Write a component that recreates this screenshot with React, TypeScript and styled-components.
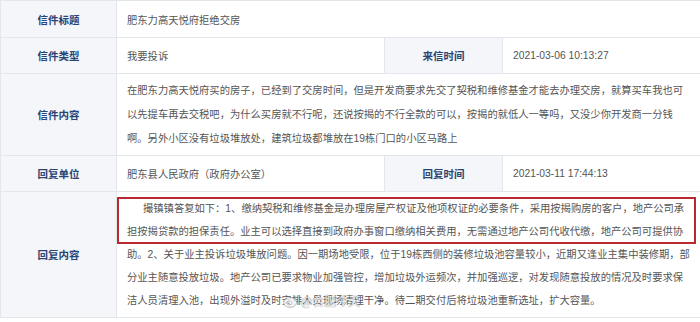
import React from "react";
import styled, { createGlobalStyle } from "styled-components";

const Global = createGlobalStyle`
  html, body { margin: 0; padding: 0; background: #fff; }
  body { font-family: "Liberation Sans", "Noto Sans CJK SC", sans-serif; }
`;

const Table = styled.div`
  display: grid;
  grid-template-columns: 116px 268px 118px 198px;
  grid-template-rows: 37px 36px 82px 36px 126px;
  width: 700px;
  box-sizing: border-box;
  border-top: 1px solid #e3e6eb;
  border-left: 1px solid #e3e6eb;
  font-size: 10.3px;
`;

const Cell = styled.div<{ $span?: boolean }>`
  box-sizing: border-box;
  border-right: 1px solid #e3e6eb;
  border-bottom: 1px solid #e3e6eb;
  display: flex;
  align-items: center;
  grid-column: ${(p) => (p.$span ? "2 / -1" : "auto")};
  min-width: 0;
`;

const Label = styled(Cell)`
  background: #f4f6fa;
  color: #2a4474;
  font-weight: 600;
  font-size: 10.5px;
  justify-content: center;
  font-family: "Noto Sans CJK SC", sans-serif;
`;

const Value = styled(Cell)`
  color: #555;
  padding: 0 10px;
  font-family: "Liberation Sans", "Noto Sans CJK SC", sans-serif;
`;

const Para = styled.p<{ $lh: number }>`
  margin: 0;
  line-height: ${(p) => p.$lh}px;
  white-space: nowrap;
  color: #555;
`;

const Line = styled.span<{ $indent?: boolean }>`
  display: block;
  padding-left: ${(p) => (p.$indent ? "16px" : "0")};
`;

const ReplyCell = styled(Value)`
  position: relative;
`;

const Highlight = styled.div`
  position: absolute;
  left: 0;
  right: 4px;
  top: 5px;
  height: 47px;
  box-sizing: border-box;
  border: 2px solid #b92a30;
  pointer-events: none;
`;

const Watermark = styled.div`
  position: absolute;
  left: 166px;
  top: 100px;
  display: flex;
  align-items: center;
  gap: 2px;
  font-family: "Noto Sans CJK SC", sans-serif;
  font-size: 12px;
  color: rgba(255, 255, 255, 0.85);
  text-shadow: 0 0 1px #888, 0 0 1px #888;
  opacity: 0.8;
`;

const WeiboLogo = () => (
  <svg width="16" height="14" viewBox="0 0 16 14">
    <ellipse cx="7" cy="8.5" rx="6.5" ry="4.8" fill="#fff" stroke="#999" strokeWidth="0.9" />
    <ellipse cx="6.3" cy="9" rx="2.6" ry="2" fill="none" stroke="#999" strokeWidth="0.8" />
    <circle cx="5.8" cy="9.3" r="0.8" fill="#999" />
    <path d="M11 2.2 A3.3 3.3 0 0 1 14.6 5.6" fill="none" stroke="#999" strokeWidth="0.9" />
    <path d="M11.2 3.8 A1.6 1.6 0 0 1 12.9 5.5" fill="none" stroke="#999" strokeWidth="0.9" />
  </svg>
);

export default function App() {
  return (
    <>
      <Global />
      <Table>
        <Label>信件标题</Label>
        <Value $span>肥东力高天悦府拒绝交房</Value>

        <Label>信件类型</Label>
        <Value>我要投诉</Value>
        <Label>来信时间</Label>
        <Value>2021-03-06 10:13:27</Value>

        <Label>信件内容</Label>
        <Value $span>
          <Para $lh={24}>
            <Line>在肥东力高天悦府买的房子，已经到了交房时间，但是开发商要求先交了契税和维修基金才能去办理交房，就算买车我也可</Line>
            <Line>以先提车再去交税吧，为什么买房就不行呢，还说按揭的不行全款的可以，按揭的就低人一等吗，又没少你开发商一分钱</Line>
            <Line>啊。另外小区没有垃圾堆放处，建筑垃圾都堆放在19栋门口的小区马路上</Line>
          </Para>
        </Value>

        <Label>回复单位</Label>
        <Value>肥东县人民政府（政府办公室）</Value>
        <Label>回复时间</Label>
        <Value>2021-03-11 17:44:13</Value>

        <Label>回复内容</Label>
        <ReplyCell $span>
          <Para $lh={23}>
            <Line $indent>撮镇镇答复如下：1、缴纳契税和维修基金是办理房屋产权证及他项权证的必要条件，采用按揭购房的客户，地产公司承</Line>
            <Line>担按揭贷款的担保责任。业主可以选择直接到政府办事窗口缴纳相关费用，无需通过地产公司代收代缴，地产公司可提供协</Line>
            <Line>助。2、关于业主投诉垃圾堆放问题。因一期场地受限，位于19栋西侧的装修垃圾池容量较小，近期又逢业主集中装修期，部</Line>
            <Line>分业主随意投放垃圾。地产公司已要求物业加强管控，增加垃圾外运频次，并加强巡逻，对发现随意投放的情况及时要求保</Line>
            <Line>洁人员清理入池，出现外溢时及时安排人员现场清理干净。待二期交付后将垃圾池重新选址，扩大容量。</Line>
          </Para>
          <Highlight />
          <Watermark>
            <WeiboLogo />
            <span>@合肥今天</span>
          </Watermark>
        </ReplyCell>
      </Table>
    </>
  );
}
